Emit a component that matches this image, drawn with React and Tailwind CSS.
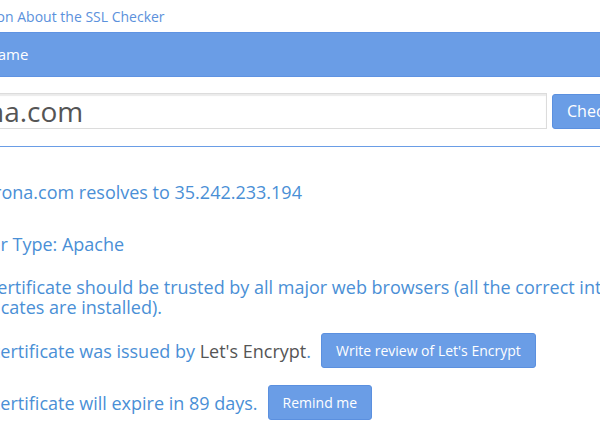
import React from 'react';

const domain = 'verona.com';

const Btn = ({ children, className = '' }) => (
  <button className={`h-[35px] px-[14px] rounded-[3px] bg-[#6a9de6] border border-[#5b90df] text-white text-[14px] leading-none whitespace-nowrap ${className}`}>
    {children}
  </button>
);

const App = () => {
  return (
    <div className="w-[600px] h-[424px] overflow-hidden bg-white font-['Open_Sans',sans-serif]">
      {/* top link */}
      <div className="h-[32px] flex items-center ml-[-64px]">
        <a className="text-[14px] text-[#5b91dc] whitespace-nowrap">Information About the SSL Checker</a>
      </div>

      {/* form header bar */}
      <div className="h-[45px] bg-[#6a9de6] border-y border-[#5f93e2] flex items-center w-[700px] ml-[-44px]">
        <span className="text-[15px] text-white">Hostname</span>
      </div>

      {/* hostname input + check */}
      <div className="mt-[16px] flex items-center gap-[5px] ml-[-80px]">
        <div className="shrink-0 w-[627px] h-[36px] border border-[#dcdcdc] shadow-[inset_0_2px_1px_rgba(0,0,0,0.08)] flex items-center pl-[8px]">
          <span className="text-[28px] text-[#555] leading-none">{domain}</span>
        </div>
        <Btn className="shrink-0 h-[34px] text-[16px]">Check SSL</Btn>
      </div>

      <div className="mt-[17px] h-px bg-[#6a9de6] w-[700px] ml-[-40px]" />

      {/* results */}
      <div className="text-[18px] text-[#4a8fd6] leading-[20px]">
        <p className="mt-[35px] ml-[-25px] whitespace-nowrap">{domain} resolves to 35.242.233.194</p>
        <p className="mt-[32px] ml-[-46px] whitespace-nowrap">Server Type: Apache</p>
        <p className="mt-[23px] ml-[-47px] w-[760px]">
          The certificate should be trusted by all major web browsers (all the correct intermediate certificates are installed).
        </p>
        <div className="mt-[16px] ml-[-44px] flex items-center gap-[10px] whitespace-nowrap">
          <span>
            The certificate was issued by <a className="text-[#555]">Let's Encrypt</a>.
          </span>
          <Btn>Write review of Let's Encrypt</Btn>
        </div>
        <div className="mt-[17px] ml-[-44px] flex items-center gap-[10px] whitespace-nowrap">
          <span>The certificate will expire in 89 days.</span>
          <Btn>Remind me</Btn>
        </div>
      </div>
    </div>
  );
};

export default App;
